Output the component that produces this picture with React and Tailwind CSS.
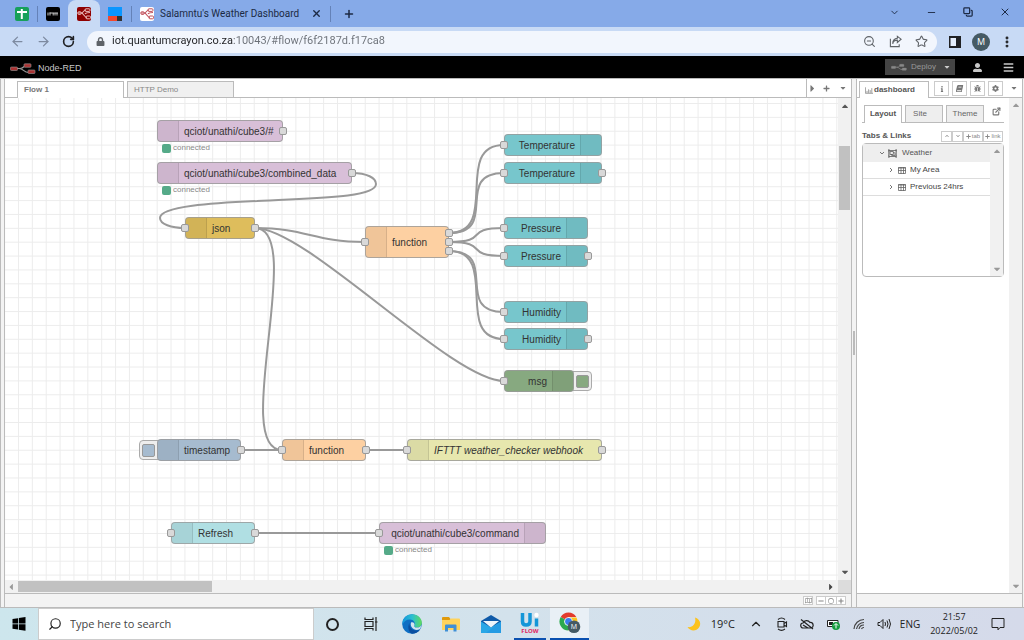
import {
  ArrowLeft,
  ArrowRight,
  ChevronDown,
  ChevronUp,
  Copy,
  ExternalLink,
  Minus,
  MoreVertical,
  Plus,
  RotateCw,
  Search,
  Star,
  X,
  ZoomOut,
} from "lucide-react";
import {
  FaBars,
  FaBook,
  FaBug,
  FaCaretDown,
  FaCaretLeft,
  FaCaretRight,
  FaCaretUp,
  FaCog,
  FaInfo,
  FaLock,
  FaPlus,
  FaMinus,
  FaRegCircle,
  FaRegMap,
  FaRegObjectGroup,
  FaUserAlt,
  FaChevronDown,
  FaChevronUp,
} from "react-icons/fa";

const nodes = [
  { id: "sub-all", label: "qciot/unathi/cube3/#", x: 152, y: 22, w: 126, color: "bg-[#d8bfd8]", icon: "left", outs: 1, status: "connected" },
  { id: "sub-data", label: "qciot/unathi/cube3/combined_data", x: 152, y: 64, w: 195, color: "bg-[#d8bfd8]", icon: "left", outs: 1, status: "connected" },
  { id: "json", label: "json", x: 180, y: 119, w: 70, color: "bg-[#debd5c]", icon: "left", input: true, outs: 1 },
  { id: "split", label: "function", x: 360, y: 128, w: 84, color: "bg-[#fdd0a2]", icon: "left", input: true, outs: 3 },
  { id: "temp-1", label: "Temperature", x: 499, y: 36, w: 98, color: "bg-[#77c6cc]", icon: "right", input: true, outs: 0 },
  { id: "temp-2", label: "Temperature", x: 499, y: 64, w: 98, color: "bg-[#77c6cc]", icon: "right", input: true, outs: 1 },
  { id: "press-1", label: "Pressure", x: 499, y: 119, w: 84, color: "bg-[#77c6cc]", icon: "right", input: true, outs: 0 },
  { id: "press-2", label: "Pressure", x: 499, y: 147, w: 84, color: "bg-[#77c6cc]", icon: "right", input: true, outs: 1 },
  { id: "hum-1", label: "Humidity", x: 499, y: 203, w: 84, color: "bg-[#77c6cc]", icon: "right", input: true, outs: 0 },
  { id: "hum-2", label: "Humidity", x: 499, y: 230, w: 84, color: "bg-[#77c6cc]", icon: "right", input: true, outs: 1 },
  { id: "msg", label: "msg", x: 499, y: 272, w: 70, color: "bg-[#87a980]", icon: "right", input: true, outs: 0, button: "right" },
  { id: "inject", label: "timestamp", x: 152, y: 341, w: 84, color: "bg-[#a6bbcf]", icon: "left", outs: 1, button: "left" },
  { id: "check", label: "function", x: 277, y: 341, w: 84, color: "bg-[#fdd0a2]", icon: "left", input: true, outs: 1 },
  { id: "hook", label: "IFTTT weather_checker webhook", x: 402, y: 341, w: 195, color: "bg-[#e7e7ae]", icon: "left", input: true, outs: 1, italic: true },
  { id: "refresh", label: "Refresh", x: 166, y: 424, w: 84, color: "bg-[#b0dfe3]", icon: "left", input: true, outs: 1 },
  { id: "command", label: "qciot/unathi/cube3/command", x: 374, y: 424, w: 167, color: "bg-[#d8bfd8]", icon: "right", input: true, outs: 0, status: "connected" },
];

const wires = [
  ["json", 0, "split"],
  ["json", 0, "msg"],
  ["json", 0, "check"],
  ["split", 0, "temp-1"],
  ["split", 0, "temp-2"],
  ["split", 1, "press-1"],
  ["split", 1, "press-2"],
  ["split", 2, "hum-1"],
  ["split", 2, "hum-2"],
  ["inject", 0, "check"],
  ["check", 0, "hook"],
  ["refresh", 0, "command"],
];

const nodeHeight = (n) => (n.outs > 1 ? 32 : 22);

function wirePath([from, port, to]) {
  const a = nodes.find((n) => n.id === from);
  const b = nodes.find((n) => n.id === to);
  const x1 = a.x + a.w;
  const y1 = a.y + nodeHeight(a) / 2 + (port - (a.outs - 1) / 2) * 9;
  const x2 = b.x;
  const y2 = b.y + nodeHeight(b) / 2;
  const reach = Math.min(52, 0.75 * Math.hypot(x2 - x1, y2 - y1));
  return `M${x1} ${y1} C${x1 + reach} ${y1} ${x2 - reach} ${y2} ${x2} ${y2}`;
}

function Port() {
  return <span className="block size-2 rounded-xs border border-[#999] bg-[#d9d9d9]" />;
}

function NodeButton({ side, color, label }) {
  return (
    <button
      aria-label={label}
      className={`absolute top-px flex h-5 w-6 items-center rounded-sm border border-[#aaa] bg-[#eee] px-0.5 ${
        side === "left" ? "-left-[18px] justify-start" : "-right-[18px] justify-end"
      }`}
    >
      <span className={`size-[13px] rounded-xs border border-[#999] ${color}`} />
    </button>
  );
}

function FlowNode({ node }) {
  const left = node.icon === "left";
  return (
    <div className="absolute" style={{ left: node.x, top: node.y, width: node.w, height: nodeHeight(node) }}>
      {node.button && <NodeButton side={node.button} color={node.color} label={`${node.label} button`} />}
      <div
        className={`relative flex h-full items-center overflow-hidden rounded-sm border border-[#999]/80 text-[10px] text-[#333] ${node.color} ${
          left ? "flex-row" : "flex-row-reverse"
        } ${node.italic ? "italic" : ""}`}
      >
        <span className={`h-full w-[21px] shrink-0 border-black/10 bg-black/5 ${left ? "border-r" : "border-l"}`} />
        <span className="px-[5px] whitespace-nowrap">{node.label}</span>
      </div>
      {node.input && (
        <div className="absolute inset-y-0 -left-1 flex items-center">
          <Port />
        </div>
      )}
      <div className="absolute inset-y-0 -right-1 flex flex-col items-center justify-center gap-px">
        {Array.from({ length: node.outs }, (_, i) => (
          <Port key={i} />
        ))}
      </div>
      {node.status && (
        <div className="absolute top-full left-[5px] flex h-3 items-center gap-0.5 text-[8px] text-[#888]">
          <span className="size-[9px] rounded-xs bg-[#5a8]" />
          {node.status}
        </div>
      )}
    </div>
  );
}

function FlowCanvas() {
  return (
    <div className="relative min-w-0 flex-1 overflow-hidden bg-white">
      <svg className="absolute inset-0 h-full w-full" fill="none">
        <defs>
          <pattern id="grid" x="-0.9" y="5" width="13.87" height="13.87" patternUnits="userSpaceOnUse">
            <path d="M0.5 0V13.87M0 0.5H13.87" stroke="#ececec" />
          </pattern>
        </defs>
        <rect width="100%" height="100%" fill="url(#grid)" />
        <g stroke="#999" strokeWidth="2">
          {wires.map((w) => (
            <path key={w.join("-")} d={wirePath(w)} />
          ))}
          <path d="M347 75C362 75 371 80 371 86C371 101 295 100 252 103C209 105 155 108 155 120C155 126 166 130 180 130" />
        </g>
      </svg>
      {nodes.map((n) => (
        <FlowNode key={n.id} node={n} />
      ))}
    </div>
  );
}

function NodeRedMark({ className, line = "#999", box = "#a33" }) {
  return (
    <svg viewBox="0 0 26 12" className={className}>
      <path d="M6 5.5H10C14 5.5 13 2.5 17 2.5M9 5.5C14 5.5 13 9.500 19 9.500" fill="none" stroke={line} strokeWidth="1.200" />
      <g fill={box} stroke={line} strokeWidth="0.600">
        <rect x="0.500" y="4" width="7" height="3.500" rx="0.800" />
        <rect x="14" y="0.800" width="7" height="3.500" rx="0.800" />
        <rect x="18" y="7" width="7" height="3.500" rx="0.800" />
      </g>
    </svg>
  );
}

function RedFavicon({ className, fg }) {
  return (
    <svg viewBox="0 0 14 14" className={className}>
      <path
        d="M1 6H4C7 6 6 3 9 3M4 6C7 6 7 10.500 10 10.500M8 7C9 5.500 10 5.500 13 5.500"
        fill="none"
        stroke={fg}
        strokeWidth="1.100"
      />
      <g fill="none" stroke={fg} strokeWidth="1">
        <rect x="8" y="1.800" width="5" height="2.600" rx="1" />
        <rect x="9" y="9" width="4.500" height="2.800" rx="1" />
        <rect x="0.800" y="4.800" width="3.400" height="2.600" rx="1" />
      </g>
    </svg>
  );
}

function BrowserTabs() {
  return (
    <div className="flex h-[27px] shrink-0 items-center bg-[#86aae8] text-[#1c2a44]">
      <button aria-label="Sheets tab" className="ml-[15px] flex size-[14px] items-center justify-center rounded-xs bg-[#17a05a]">
        <svg viewBox="0 0 14 14" className="size-[14px]">
          <path d="M6.800 2V12M2 5H12" stroke="#fff" strokeWidth="2" />
        </svg>
      </button>
      <span className="ml-2 h-4 w-px bg-[#6482b8]" />
      <button aria-label="IFTTT tab" className="ml-2 flex size-[14px] items-center justify-center rounded-xs bg-black">
        <svg viewBox="0 0 14 14" className="size-[14px]">
          <path d="M2 5.500V8.500M4 5.500V8.500M3.500 6H6M6 6H8.500M7.200 6V8.500M8.500 6H12M9 6V8.500M11 6V8.500" stroke="#ddd" strokeWidth="0.900" />
        </svg>
      </button>
      <button aria-label="Node-RED tab" className="ml-2 flex h-[27px] w-8 items-center justify-center rounded-t-lg bg-[#c8daf5]">
        <RedFavicon className="size-[14px] rounded-xs bg-[#8f0000]" fg="#e9b9b9" />
      </button>
      <button aria-label="Tab" className="ml-2">
        <svg viewBox="0 0 14 14" className="size-[14px]">
          <path fill="#0a96ff" d="M0 0H14V14H0z" />
          <path fill="#f2482e" d="M0 9H9V14H0z" />
          <path fill="#333" d="M9 9H14V14H9z" />
        </svg>
      </button>
      <span className="ml-[9px] h-4 w-px bg-[#6482b8]" />
      <button className="ml-2 flex items-center gap-[6px] font-['Roboto',sans-serif] text-[10px]">
        <RedFavicon className="size-[14px] rounded-xs bg-white" fg="#c0505a" />
        Salamntu's Weather Dashboard
      </button>
      <button aria-label="Close tab" className="ml-3">
        <X className="size-[11px]" strokeWidth={3} />
      </button>
      <span className="ml-2 h-4 w-px bg-[#6482b8]" />
      <button aria-label="New tab" className="ml-3">
        <Plus className="size-3" strokeWidth={3} />
      </button>
      <div className="mr-[13px] ml-auto flex items-center gap-[26px] pb-[3px]">
        <ChevronDown className="size-[11px]" />
        <button aria-label="Minimize">
          <Minus className="size-[11px]" />
        </button>
        <button aria-label="Restore">
          <Copy className="size-[10px] -scale-x-100 rotate-90" strokeWidth={3} />
        </button>
        <button aria-label="Close window">
          <X className="size-3" />
        </button>
      </div>
    </div>
  );
}

function AddressBar() {
  return (
    <div className="flex h-[29px] shrink-0 items-center bg-[#c8daf5] text-[#5f6368]">
      <button aria-label="Back" className="ml-[10px]">
        <ArrowLeft className="size-[15px] text-[#7d8aa0]" />
      </button>
      <button aria-label="Forward" className="ml-[11px]">
        <ArrowRight className="size-[15px] text-[#7d8aa0]" />
      </button>
      <button aria-label="Reload" className="ml-[11px]">
        <RotateCw className="size-[13px] text-[#202124]" strokeWidth={3} />
      </button>
      <div className="ml-3 flex h-[22px] flex-1 items-center rounded-full bg-[#f2f6fd] pr-[9px] pl-[9px]">
        <FaLock className="size-[9px]" />
        <input
          aria-label="Address"
          defaultValue="iot.quantumcrayon.co.za:10043/#flow/f6f2187d.f17ca8"
          className="ml-[7px] min-w-0 flex-1 bg-linear-[90deg,#202124_122px,#6b7077_122px] bg-clip-text font-['Roboto',sans-serif] text-[11px] text-transparent outline-none"
        />
        <div className="flex items-center gap-[13px]">
          <ZoomOut className="size-[13px]" />
          <svg viewBox="0 0 14 14" className="size-[13px]" fill="none" stroke="currentColor" strokeWidth="1.200">
            <path d="M1.500 4V12.500H11V10M4 9.500C4.500 6 7 5.500 9 5.500V8L13 4.500L9 1.500V3.500C6 3.700 4 6 4 9.500z" />
          </svg>
          <Star className="size-[13px]" />
        </div>
      </div>
      <svg viewBox="0 0 12 12" className="ml-3 size-[12px]">
        <path fill="#202124" d="M0 0H12V12H0z" />
        <path fill="#e4edfb" d="M1.500 2H7V10H1.500z" />
      </svg>
      <span className="ml-[11px] flex size-[18px] items-center justify-center rounded-full bg-[#455a64] text-[9px] text-white">
        M
      </span>
      <button aria-label="Browser menu" className="mr-[10px] ml-[10px]">
        <MoreVertical className="size-[14px] text-[#202124]" strokeWidth={3} />
      </button>
    </div>
  );
}

function EditorHeader() {
  return (
    <header className="flex h-[22px] shrink-0 items-center bg-black pr-[10px] pl-[10px] text-[#c7c7c7]">
      <NodeRedMark className="mt-[3px] h-3 w-[26px]" />
      <span className="mt-[3px] ml-[2px] text-[9px]">Node-RED</span>
      <button className="ml-auto flex h-[16px] w-[70px] items-center bg-[#444] pl-[6px] text-[8px] text-[#999]">
        <NodeRedMark className="h-[9px] w-4" line="#888" box="#888" />
        <span className="ml-1">Deploy</span>
        <FaCaretDown className="ml-auto mr-1 size-2 text-[#ccc]" />
      </button>
      <button aria-label="User" className="ml-[18px]">
        <FaUserAlt className="size-[9px]" />
      </button>
      <button aria-label="Menu" className="ml-[21px]">
        <FaBars className="size-[11px]" />
      </button>
    </header>
  );
}

function Workspace() {
  return (
    <main className="flex min-w-0 flex-1 flex-col border-x border-[#bbb] bg-white">
      <div className="flex h-[19px] shrink-0 items-end border-b border-[#bbb] text-[8px] text-[#888]">
        <button className="ml-3 -mb-px h-[17px] w-[107px] border border-b-0 border-[#bbb] bg-white pl-[6px] text-left font-bold text-[#777]">
          Flow 1
        </button>
        <button className="ml-[3px] h-4 w-[107px] border border-b-0 border-[#bbb] bg-[#f0f0f0] pl-[6px] text-left">HTTP Demo</button>
        <div className="ml-auto flex h-full w-[45px] items-center border-l border-[#bbb] text-[#777]">
          <FaCaretRight className="size-[11px]" />
          <FaPlus className="ml-[5px] size-[7px]" />
          <FaCaretDown className="ml-[9px] size-2" />
        </div>
      </div>
      <div className="flex min-h-0 flex-1">
        <FlowCanvas />
        <div className="flex w-[13px] flex-col items-center bg-[#f1f1f1] py-[3px]">
          <FaCaretUp className="size-[10px] text-[#555]" />
          <div className="mt-[35px] h-16 w-[11px] bg-[#c1c1c1]" />
          <FaCaretDown className="mt-auto size-[10px] text-[#555]" />
        </div>
      </div>
      <div className="flex h-[14px] shrink-0 items-center border-b border-[#bbb] bg-[#f1f1f1]">
        <FaCaretLeft className="ml-px size-[10px] text-[#999]" />
        <div className="ml-[2px] h-[11px] w-[194px] bg-[#c1c1c1]" />
        <FaCaretRight className="mr-[2px] ml-auto size-[10px] text-[#444]" />
        <span className="h-full w-[13px] bg-[#dcdcdc]" />
      </div>
      <div className="flex h-[13px] shrink-0 items-center justify-end bg-[#f3f3f3] pr-[5px] text-[#888]">
        <button aria-label="Navigator" className="mr-[3px] flex h-[9px] w-[10px] items-center justify-center border border-[#ccc] bg-white">
          <FaRegMap className="size-[7px]" />
        </button>
        <button aria-label="Zoom out" className="flex h-[9px] w-[10px] items-center justify-center border border-[#ccc] bg-white">
          <FaMinus className="size-[6px]" />
        </button>
        <button aria-label="Reset zoom" className="flex h-[9px] w-[10px] items-center justify-center border-y border-[#ccc] bg-white">
          <FaRegCircle className="size-[6px]" />
        </button>
        <button aria-label="Zoom in" className="flex h-[9px] w-[10px] items-center justify-center border border-[#ccc] bg-white">
          <FaPlus className="size-[6px]" />
        </button>
      </div>
    </main>
  );
}

function SideTab({ label, children }) {
  return (
    <button aria-label={label} className="flex h-[15px] w-[15px] items-center justify-center border border-[#ccc] bg-white text-[#777]">
      {children}
    </button>
  );
}

function MiniButton({ label, children, wide }) {
  return (
    <button
      aria-label={label}
      className={`flex h-[11px] items-center justify-center gap-px border border-[#ccc] bg-white text-[6px] text-[#888] ${
        wide ? "w-5" : "w-[11px]"
      }`}
    >
      {children}
    </button>
  );
}

function BarsIcon() {
  return (
    <svg viewBox="0 0 10 8" className="h-[7px] w-2">
      <path d="M0.500 0V7.500H10M2.500 7V4.500M4.500 7V2.500M6.500 7V3.500M8.500 7V1" fill="none" stroke="#888" />
    </svg>
  );
}

function GridIcon() {
  return (
    <svg viewBox="0 0 8 7" className="h-[7px] w-2">
      <path d="M0.500 0.500H7.500V6.500H0.500zM0 1H8M0 3.500H8M3 0V7M5.500 0V7" fill="none" stroke="#666" strokeWidth="0.800" />
    </svg>
  );
}

function TreeChevron({ open }) {
  return (
    <svg viewBox="0 0 6 6" className="size-[6px]" fill="none" stroke="#777">
      <path d={open ? "M1 2L3 4L5 2" : "M2 1L4 3L2 5"} />
    </svg>
  );
}

const groups = ["My Area", "Previous 24hrs"];

function Sidebar() {
  return (
    <aside className="mr-px flex w-[167px] shrink-0 flex-col border-x border-[#bbb] bg-white text-[8px] text-[#444]">
      <div className="flex h-[19px] shrink-0 items-end border-b border-[#bbb]">
        <button className="ml-[2px] -mb-px flex h-[17px] w-[70px] items-center gap-px border border-b-0 border-[#bbb] bg-white pl-[5px] font-bold text-[#555]">
          <BarsIcon />
          dashboard
        </button>
        <div className="mb-px ml-[5px] flex gap-[3px]">
          <SideTab label="Information">
            <FaInfo className="size-[6px]" />
          </SideTab>
          <SideTab label="Help">
            <FaBook className="size-[7px] -skew-x-12" />
          </SideTab>
          <SideTab label="Debug">
            <FaBug className="size-[7px]" />
          </SideTab>
          <SideTab label="Configuration">
            <FaCog className="size-[7px]" />
          </SideTab>
        </div>
        <FaCaretDown className="mr-1 mb-[5px] ml-auto size-2 text-[#777]" />
      </div>
      <div className="flex min-h-0 flex-1 border-b border-[#bbb]">
        <div className="flex min-w-0 flex-1 flex-col pt-[6px] pr-[5px] pl-[5px]">
          <div className="flex h-[19px] items-end gap-[3px] border-b border-[#bbb] pl-[2px]">
            <button className="-mb-px h-[18px] w-[38px] border border-b-0 border-[#bbb] bg-white pb-px font-bold text-[#555]">Layout</button>
            <button className="h-[17px] w-[38px] border border-b-0 border-[#bbb] bg-[#eee] pr-2 text-[#666]">Site</button>
            <button className="h-[17px] w-[38px] border border-b-0 border-[#bbb] bg-[#eee] text-[#666]">Theme</button>
            <ExternalLink className="mr-[3px] mb-[6px] ml-auto size-[9px] text-[#777]" strokeWidth={3} />
          </div>
          <div className="mt-[7px] flex h-3 items-center">
            <span className="font-bold text-[#555]">Tabs &amp; Links</span>
            <div className="mr-px ml-auto flex">
              <MiniButton label="Collapse">
                <FaChevronUp className="size-1" />
              </MiniButton>
              <MiniButton label="Expand">
                <FaChevronDown className="size-1" />
              </MiniButton>
              <MiniButton wide>
                <FaPlus className="size-[5px]" />
                tab
              </MiniButton>
              <MiniButton wide>
                <FaPlus className="size-[5px]" />
                link
              </MiniButton>
            </div>
          </div>
          <div className="mt-px flex h-[134px] rounded-sm border border-[#bbb]">
            <ul className="min-w-0 flex-1">
              <li className="flex h-[18px] items-center bg-[#eee] pl-4 text-[#555]">
                <TreeChevron open />
                <FaRegObjectGroup className="ml-[3px] size-[9px]" />
                <span className="ml-[5px]">Weather</span>
              </li>
              {groups.map((g) => (
                <li key={g} className="flex h-[17px] items-center border-b border-[#ddd] pl-[25px]">
                  <TreeChevron />
                  <span className="ml-1">
                    <GridIcon />
                  </span>
                  <span className="ml-1">{g}</span>
                </li>
              ))}
            </ul>
            <div className="flex w-[13px] flex-col items-center justify-between bg-[#f1f1f1] py-[2px] text-[#999]">
              <FaCaretUp className="size-[10px]" />
              <FaCaretDown className="size-[10px]" />
            </div>
          </div>
        </div>
        <div className="flex w-[13px] flex-col items-center justify-between bg-[#f1f1f1] py-[2px] text-[#999]">
          <FaCaretUp className="size-[10px]" />
          <FaCaretDown className="size-[10px]" />
        </div>
      </div>
      <div className="h-[13px] shrink-0 bg-[#f3f3f3]" />
    </aside>
  );
}

function EdgeIcon() {
  return (
    <svg viewBox="0 0 20 20" className="size-5">
      <defs>
        <linearGradient id="edge" x1="0" y1="0.300" x2="1" y2="0.300">
          <stop offset="0" stopColor="#1495dc" />
          <stop offset="0.500" stopColor="#2bbfd0" />
          <stop offset="1" stopColor="#5fdb5c" />
        </linearGradient>
      </defs>
      <circle cx="10" cy="10" r="9.800" fill="#0f6fc4" />
      <path d="M0.500 8C1.500 3 5.500 0.200 10 0.200C16 0.200 19.800 4.500 19.800 8.500C19.800 12 17.500 13.500 15 13.500C12.500 13.500 11.500 12.500 12.500 11C13.500 9 12 5.500 8 5.500C4 5.500 1.500 7.500 0.500 11z" fill="url(#edge)" />
      <path d="M7.500 9C7 13 10 16.500 14 16.500C15.500 16.500 17 16 18 15.500C16 18.500 13 19.800 10 19.800C6 18 5.500 12 7.500 9z" fill="#0b4ea0" />
      <path d="M9 8.500C11 7.500 12.800 9 12.500 11C11.500 12.500 12.500 13.600 15 13.600C17 13.600 18.500 12.800 19.300 11.500C19 13.500 18.500 14.500 17.500 15.300C12.500 17.500 7.500 13 9 8.500z" fill="#d3e3ee" />
    </svg>
  );
}

function FolderIcon() {
  return (
    <svg viewBox="0 0 18 16" className="h-4 w-[18px]">
      <path d="M0 2A1 1 0 0 1 1 1H7L8.500 3V5H0z" fill="#e09a0c" />
      <path d="M0 4H7.500L9 2.500H17A1 1 0 0 1 18 3.500V14H0z" fill="#ffd35c" />
      <path d="M3 15.500V9.500A1 1 0 0 1 4 8.500H13.500A1 1 0 0 1 14.500 9.500V15.500H11.500V12H6V15.500z" fill="#3f8fd6" />
    </svg>
  );
}

function MailIcon() {
  return (
    <svg viewBox="0 0 20 18" className="h-[18px] w-5">
      <path d="M0 6L10 0L20 6V18H0z" fill="#0f5aa8" />
      <path d="M0 6.500L10 12.500L20 6.500V18H0z" fill="#2aa7e6" />
      <path d="M20 6.500V18H5z" fill="#1f8fe0" opacity="0.500" />
      <path d="M2 6H18L10 12.500z" fill="#eef5fb" />
    </svg>
  );
}

function UiFlowIcon() {
  return (
    <svg viewBox="0 0 22 22" className="size-[22px]">
      <path d="M3.500 1V9.500Q3.500 13 7 13Q11 13 11 9.500V1M17.500 6.500V14.500" fill="none" stroke="#1496d8" strokeWidth="3.500" />
      <circle cx="17.500" cy="3" r="2.200" fill="#fff" />
      <text x="11" y="21" textAnchor="middle" fontSize="6" fontWeight="700" fill="#e0245e">
        FLOW
      </text>
    </svg>
  );
}

function ChromeIcon() {
  return (
    <svg viewBox="0 0 22 22" className="size-[22px]">
      <path d="M9.500 9.500L1.700 5A9 9 0 0 1 17.300 5H9.500z" fill="#e33b2e" />
      <path d="M9.500 9.500L1.700 5A9 9 0 0 0 9.500 18.500L13.400 11.700z" fill="#2da94f" />
      <path d="M9.500 5.500H17.500A9 9 0 0 1 9.500 18.500L13.400 11.700z" fill="#fcc31e" />
      <circle cx="9.500" cy="9.500" r="4.300" fill="#fff" />
      <circle cx="9.500" cy="9.500" r="3.400" fill="#3b7ded" />
      <circle cx="15" cy="14.800" r="6.300" fill="#455a64" />
      <text x="15" y="17.300" textAnchor="middle" fontSize="7" fill="#fff">
        M
      </text>
    </svg>
  );
}

function Taskbar() {
  return (
    <footer className="flex h-8 shrink-0 items-center bg-linear-to-r from-[#cde6ed] via-[#d3e2ec] to-[#d5daea] text-[#222]">
      <button aria-label="Start" className="ml-3 w-[26px]">
        <svg viewBox="0 0 14 14" className="size-[14px]">
          <path d="M0.500 2L6 1.200V6.500H0.500zM6.800 1.100L13.500 0V6.500H6.800zM0.500 7.300H6V12.600L0.500 11.800zM6.800 7.300H13.500V13.800L6.800 12.700z" />
        </svg>
      </button>
      <label className="flex h-full w-[276px] items-center border border-[#ccc] bg-white pl-[9px]">
        <Search className="size-[14px] -scale-x-100" strokeWidth={2} />
        <input
          aria-label="Search"
          placeholder="Type here to search"
          className="ml-2 min-w-0 flex-1 text-[11px] outline-none placeholder:text-[#444]"
        />
      </label>
      <button aria-label="Cortana" className="ml-3 size-[13px] rounded-full border-2 border-[#222]" />
      <button aria-label="Task view" className="ml-[25px]">
        <svg viewBox="0 0 14 14" className="size-[14px]" fill="none" stroke="#222" strokeWidth="1.200">
          <path d="M1 0.500V2.500H9V0.500M1 13.500V11.500H9V13.500M1 4.500H9V9.500H1zM12 0V14M11 5H13.500" />
        </svg>
      </button>
      <button aria-label="Edge" className="ml-6">
        <EdgeIcon />
      </button>
      <button aria-label="File Explorer" className="ml-5">
        <FolderIcon />
      </button>
      <button aria-label="Mail" className="ml-[21px]">
        <MailIcon />
      </button>
      <div className="ml-[13px] flex h-full">
        <button aria-label="UiFlow" className="flex h-full w-8 items-center justify-center border-b-2 border-[#0a50b0]">
          <UiFlowIcon />
        </button>
        <button aria-label="Chrome" className="ml-1 flex h-full w-[39px] items-center justify-center border-b-2 border-[#0a50b0] bg-[#e9f0f6]">
          <ChromeIcon />
        </button>
      </div>
      <div className="ml-auto flex items-center text-[11px]">
        <svg viewBox="0 0 14 14" className="size-[14px]">
          <path d="M8 0.500C13 2 14.500 7 12 10.500C9.500 14.500 3 14.500 0.500 10C6 11 9.500 6 8 0.500z" fill="#fcc21b" />
        </svg>
        <span className="ml-[10px]">19°C</span>
        <ChevronUp className="ml-[14px] size-[14px]" />
        <svg viewBox="0 0 12 14" className="ml-[13px] h-[14px] w-3" fill="none" stroke="#222" strokeWidth="1.100">
          <path d="M2 4.500H8V10H2zM8 6.500L10.500 5V9.500L8 8M2 2.500C4 0.800 7 0.800 9 2.500M2 12C4 13.500 7 13.500 9 12" />
        </svg>
        <svg viewBox="0 0 14 12" className="ml-3 h-3 w-[14px]" fill="none" stroke="#222" strokeWidth="1.200">
          <path d="M3.500 10A2.500 2.500 0 0 1 3 5A4 4 0 0 1 10 4.500A2.800 2.800 0 0 1 11 10zM1 1.500L13 11M3 7L8 10" />
        </svg>
        <svg viewBox="0 0 14 12" className="ml-[13px] h-3 w-[14px]">
          <path d="M0.500 2.500H11V8.500H0.500z" fill="#fff" stroke="#222" />
          <path d="M2 4H6V7H2z" fill="#222" />
          <circle cx="9" cy="8" r="4" fill="#169c3e" />
          <path d="M9 10.500V6M7 7.500L9 5.500L11 7.500" fill="none" stroke="#fff" />
        </svg>
        <svg viewBox="0 0 12 12" className="ml-3 size-3" fill="none" stroke="#444" strokeWidth="1.200">
          <path d="M1 11A10 10 0 0 1 11 1.500M3.500 11A7.500 7.500 0 0 1 11 4.500M6 11A5 5 0 0 1 11 7M8.500 11A2.500 2.500 0 0 1 11 9.500" />
        </svg>
        <svg viewBox="0 0 15 12" className="ml-3 h-3 w-[15px]" fill="none" stroke="#222">
          <path d="M1 4.500H3L6 1.500V10.500L3 7.500H1zM8 4Q9 6 8 8M10 2.500Q12 6 10 9.500M12 1Q15 6 12 11" />
        </svg>
        <span className="ml-2 text-[10px]">ENG</span>
        <div className="ml-[10px] flex flex-col items-center text-[9px] leading-[14px]">
          <time>21:57</time>
          <time>2022/05/02</time>
        </div>
        <button aria-label="Notifications" className="mr-[19px] ml-[13px]">
          <svg viewBox="0 0 14 14" className="size-[14px]" fill="none" stroke="#222">
            <path d="M1 1.500H13V10.500H9L7 12.800V10.500H1z" />
          </svg>
        </button>
      </div>
    </footer>
  );
}

export default function App() {
  return (
    <div className="flex h-screen flex-col overflow-hidden bg-[#f3f3f3] font-['Open_Sans','Noto_Sans',sans-serif]">
      <BrowserTabs />
      <AddressBar />
      <div className="flex min-h-0 flex-1 flex-col font-['Liberation_Sans',Arial,sans-serif]">
        <EditorHeader />
        <div className="flex min-h-0 flex-1 border-y border-[#bbb]">
          <div className="w-[4px] shrink-0 border-l border-[#bbb] bg-[#f3f3f3]" />
          <Workspace />
          <div className="flex w-[4px] shrink-0 items-center justify-center">
            <span className="h-6 w-[2px] bg-[#bbb]" />
          </div>
          <Sidebar />
        </div>
      </div>
      <Taskbar />
    </div>
  );
}
